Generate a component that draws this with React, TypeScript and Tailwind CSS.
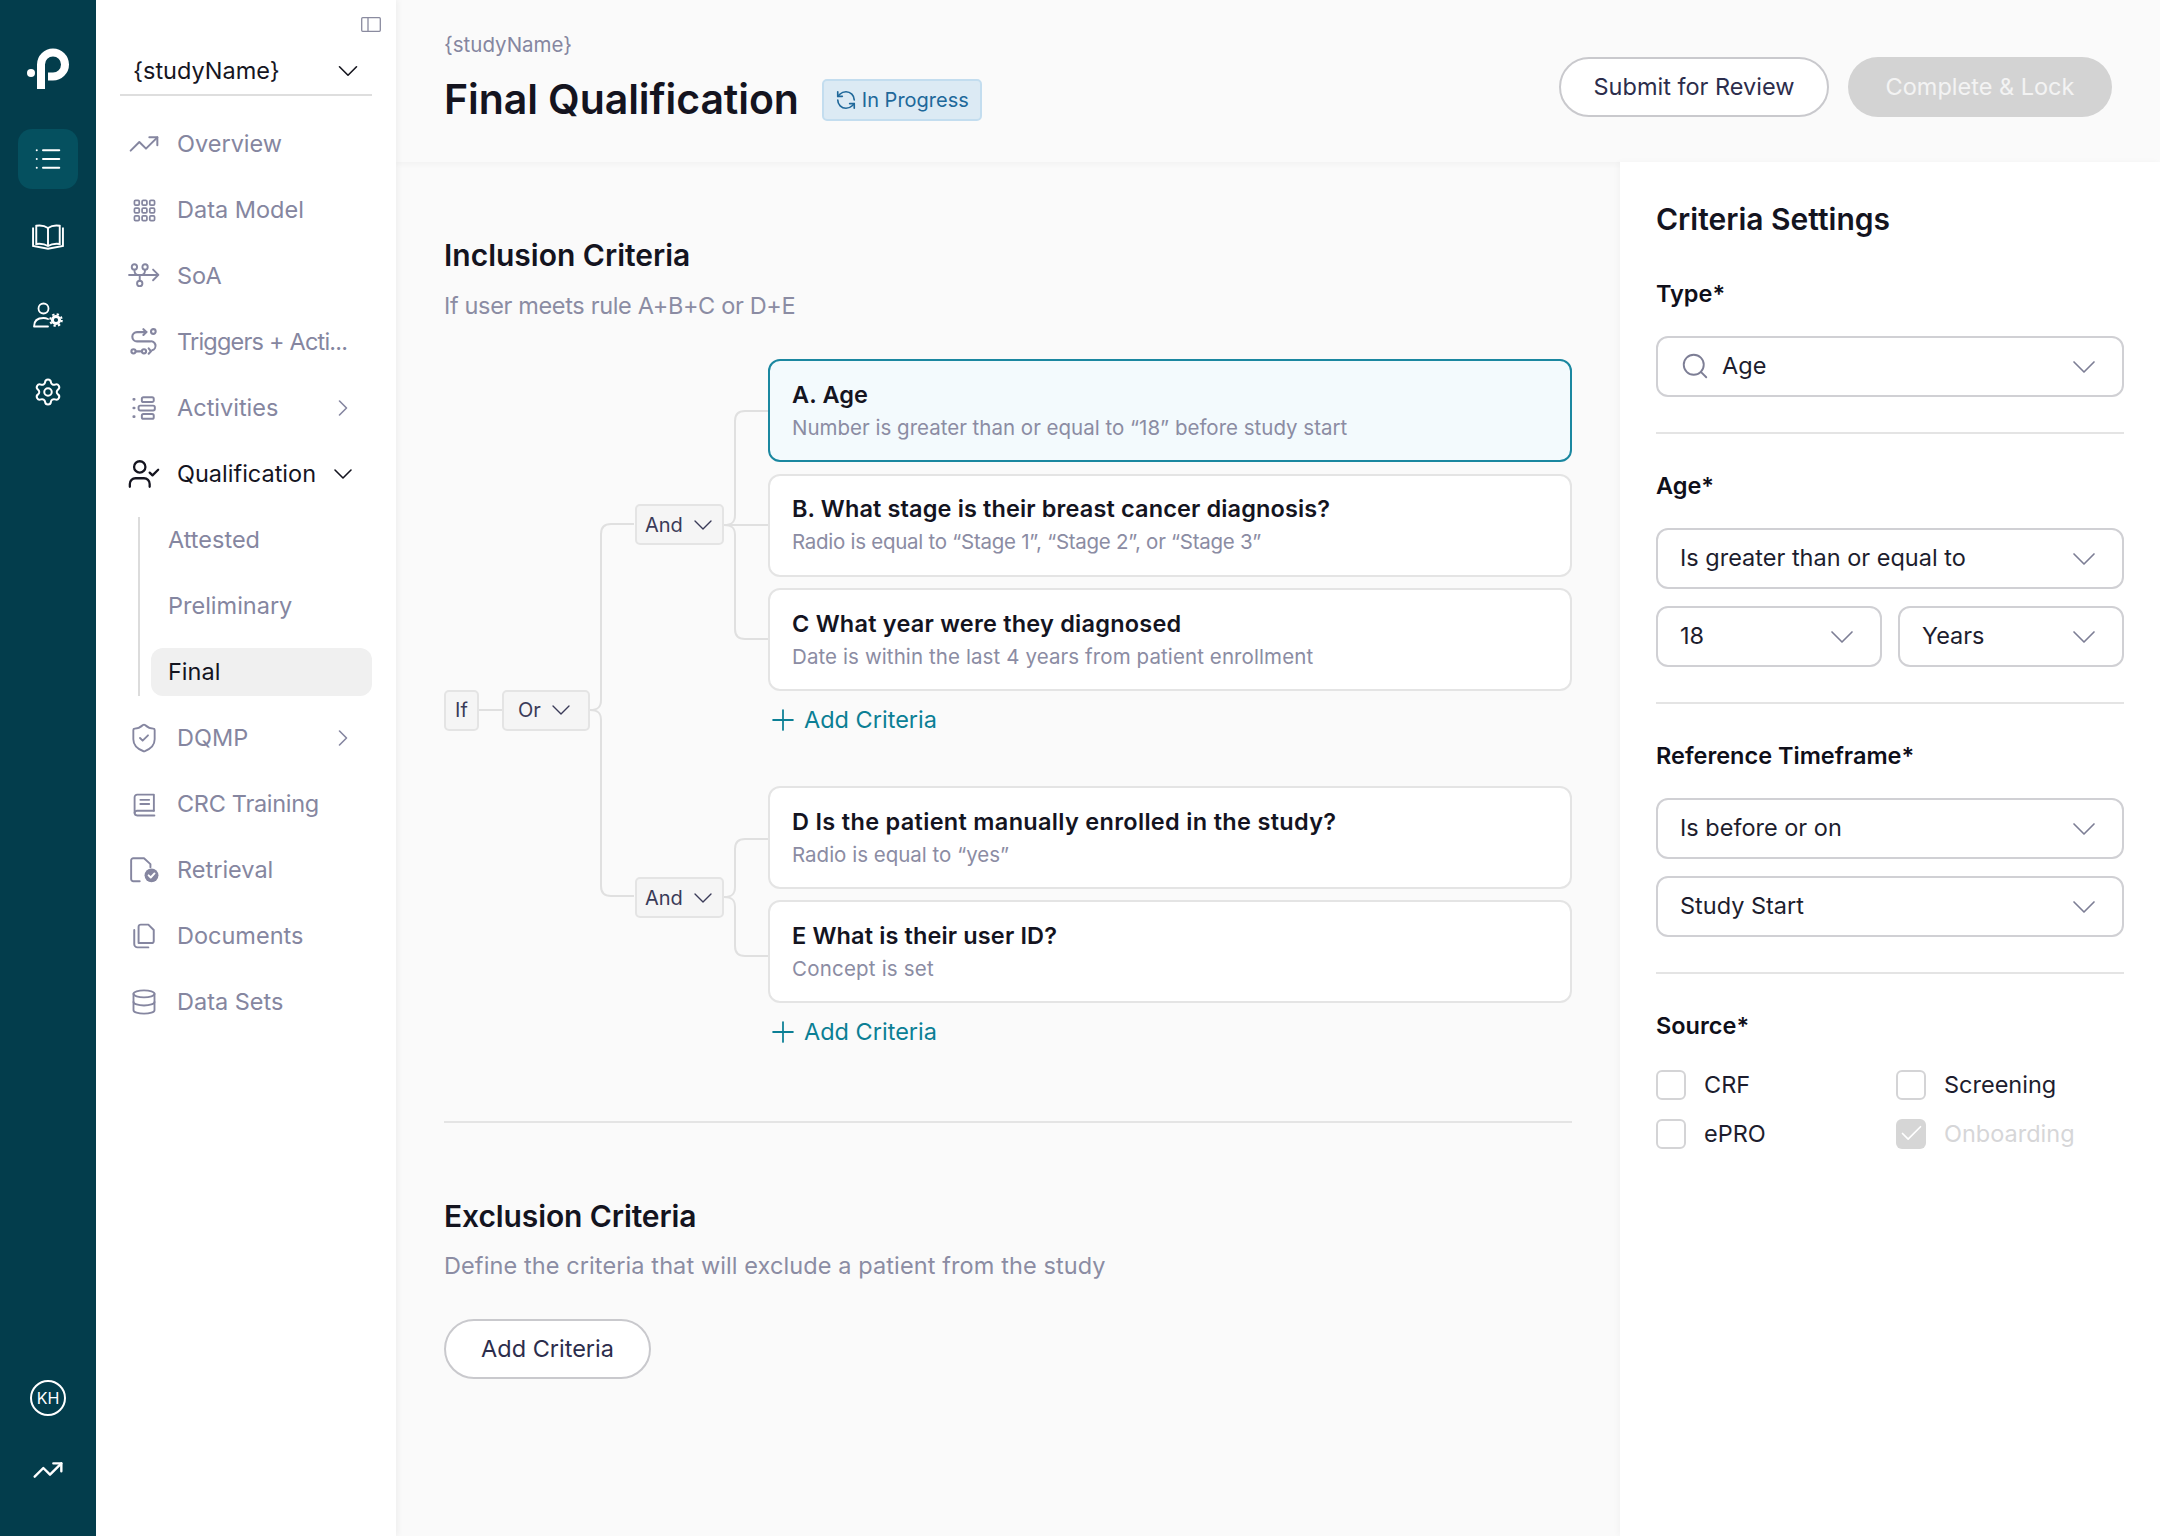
import React from "react";
import {
  ChevronDown,
  ChevronRight,
  Check,
  Database,
  List,
  Plus,
  RefreshCcw,
  Search,
  Settings,
  ShieldCheck,
  TrendingUp,
  UserCheck,
} from "lucide-react";

type IconProps = { className?: string };

const stroke = {
  fill: "none",
  stroke: "currentColor",
  strokeWidth: 1.8,
  strokeLinecap: "round" as const,
  strokeLinejoin: "round" as const,
};

function LogoIcon() {
  return (
    <svg viewBox="0 0 48 50" className="w-[48px] h-[50px]">
      <circle cx="7" cy="29" r="4" fill="#fff" />
      <path d="M17 45V20.5A12 12 0 1 1 29 32.5H24" fill="none" stroke="#fff" strokeWidth="8" />
    </svg>
  );
}

function RailBookIcon() {
  return (
    <svg viewBox="0 0 30 24" className="w-[32px] h-[26px]" fill="none" stroke="currentColor" strokeWidth="1.8">
      <path d="M1 3v17.5l14 2.5 14-2.5V3" />
      <path d="M4 1.5c4-.6 8 0 11 2 3-2 7-2.6 11-2v17c-4-.5-8 0-11 2-3-2-7-2.5-11-2z" />
      <path d="M15 3.500v17" />
    </svg>
  );
}

function RailUserGearIcon() {
  return (
    <svg viewBox="0 0 30 26" className="w-[30px] h-[26px]" fill="none" stroke="currentColor" strokeWidth="1.8">
      <circle cx="10.500" cy="6.500" r="5" />
      <path d="M1 24.500c0-6 3.500-8.500 9.500-8.500 2 0 3 .3 4.500 1M1 24.500h14" strokeLinecap="round" />
      <circle cx="23" cy="18" r="3.600" strokeWidth="3" />
      <circle cx="23" cy="18" r="5.800" strokeWidth="2" strokeDasharray="2.300 2.250" />
    </svg>
  );
}

function PanelIcon() {
  return (
    <svg viewBox="0 0 20 15" className="w-[20px] h-[15px]" {...stroke} strokeWidth={1.3}>
      <rect x="0.700" y="0.700" width="18.600" height="13.600" rx="1" />
      <path d="M7 .7v13.600" />
    </svg>
  );
}

function GridDotsIcon({ className }: IconProps) {
  const cells = [1.5, 9.5, 17.5];
  return (
    <svg viewBox="0 0 24 24" className={className} fill="none" stroke="currentColor" strokeWidth="1.8">
      {cells.map((y) =>
        cells.map((x) => <rect key={`${x}-${y}`} x={x} y={y} width="5" height="5" rx="1.200" />)
      )}
    </svg>
  );
}

function SoaIcon({ className }: IconProps) {
  return (
    <svg viewBox="0 0 30 24" className={className} {...stroke}>
      <path d="M1 11h27M23.500 6l5 5-5 5" />
      <circle cx="6" cy="3.500" r="2.500" />
      <circle cx="16" cy="3.500" r="2.500" />
      <circle cx="11" cy="19" r="2.500" />
      <path d="M6 6c0 3 .5 5 3 5M16 6c0 3-.5 5-3 5M11 16.500V11" />
    </svg>
  );
}

function TriggersIcon({ className }: IconProps) {
  return (
    <svg viewBox="0 0 24 24" className={className} {...stroke}>
      <path d="M14 3.500H6a3.800 3.800 0 0 0 0 8h11a3.800 3.800 0 0 1 2 7.500" />
      <path d="M11.500 1l2.500 2.500-2.500 2.500" />
      <circle cx="20" cy="3" r="2" />
      <circle cx="3" cy="20" r="1.800" />
      <circle cx="12" cy="20" r="1.800" />
      <path d="M5 20h4M16 17.500L18 20l-2 2" />
    </svg>
  );
}

function ActivitiesIcon({ className }: IconProps) {
  return (
    <svg viewBox="0 0 24 24" className={className} {...stroke}>
      <rect x="10" y="2" width="11" height="4.500" rx="1.500" />
      <rect x="7" y="9.800" width="15" height="4.500" rx="1.500" />
      <rect x="10" y="17.500" width="11" height="4.500" rx="1.500" />
      <path d="M2.500 4h.5M2.500 12h.5M2.500 20h.5" strokeWidth="2.400" />
    </svg>
  );
}

function TrainingBookIcon({ className }: IconProps) {
  return (
    <svg viewBox="0 0 24 24" className={className} {...stroke}>
      <path d="M21 18V2.500H5A2.500 2.500 0 0 0 2.500 5v15A2.500 2.500 0 0 0 5 22.500h16.500" />
      <path d="M2.500 20A2.500 2.500 0 0 1 5 18h16M8 7.500h8.500M8 11.500h8.500" />
    </svg>
  );
}

function RetrievalIcon({ className }: IconProps) {
  return (
    <svg viewBox="0 0 28 24" className={className} {...stroke}>
      <path d="M10 22.500H4A2 2 0 0 1 2 20.500V3a2 2 0 0 1 2-2h10l6 5.500v3" />
      <circle cx="21" cy="17" r="6.500" fill="currentColor" stroke="none" />
      <path d="M18.300 17l2 2 3.500-3.800" stroke="#fff" />
    </svg>
  );
}

function DocumentsIcon({ className }: IconProps) {
  return (
    <svg viewBox="0 0 24 24" className={className} {...stroke}>
      <path d="M7 18.500V3.500a2 2 0 0 1 2-2h7l5 5V16.500a2 2 0 0 1-2 2z" />
      <path d="M3 6.500v13a3 3 0 0 0 3 3h10" />
    </svg>
  );
}

function Logic({ label, wide = false, caret = true }: { label: string; wide?: boolean; caret?: boolean }) {
  return (
    <div
      className={`flex items-center justify-between shrink-0 h-[41px] rounded-[5px] border-2 border-[#e4e4e4] bg-[#f5f5f5] text-[20px] text-[#3a3b58] ${
        wide ? "w-[89px] pl-[8px] pr-[3px]" : caret ? "w-[88px] pl-[14px] pr-[11px]" : "w-[35px] justify-center"
      }`}
    >
      <span>{label}</span>
      {caret && <ChevronDown className="w-[32px] h-[32px]" strokeWidth={1} />}
    </div>
  );
}

function Branch({ height, ends, mid }: { height: number; ends: number[]; mid: number }) {
  const paths = ends.map((y) => {
    if (y === mid) return `M0 ${mid}H44`;
    const dir = y < mid ? -1 : 1;
    return `M0 ${mid}C8 ${mid} 11 ${mid + dir * 3} 11 ${mid + dir * 10}V${y - dir * 10}Q11 ${y} 21 ${y}H44`;
  });
  return (
    <svg width="44" height={height} className="shrink-0 overflow-visible" fill="none" stroke="#e0e0e0" strokeWidth="2">
      {paths.map((d) => (
        <path key={d} d={d} />
      ))}
    </svg>
  );
}

function CriteriaCard({
  title,
  desc,
  active = false,
  titleClass = "tracking-[0.130px]",
  descClass = "",
}: {
  title: string;
  desc: string;
  active?: boolean;
  titleClass?: string;
  descClass?: string;
}) {
  return (
    <div
      className={`flex flex-col justify-center h-[103px] rounded-[12px] border-2 px-[22px] ${
        active ? "border-[#1a87a0] bg-[#f3fafd]" : "border-[#e4e4e4] bg-white"
      }`}
    >
      <div className={`text-[23.500px] leading-[32px] font-semibold text-[#14141f] ${titleClass}`}>{title}</div>
      <div className={`mt-[2px] text-[20.500px] leading-[30px] text-[#8b8ca3] ${descClass}`}>{desc}</div>
    </div>
  );
}

function AddCriteria() {
  return (
    <div className="flex items-center h-[58px] ml-[-2px] gap-[4px] text-[#0b7f95] text-[23.500px]">
      <Plus className="w-[34px] h-[34px]" strokeWidth={1.25} />
      <span>Add Criteria</span>
    </div>
  );
}

function SelectBox({ value, search = false }: { value: string; search?: boolean }) {
  return (
    <div className="flex items-center justify-between flex-1 h-[61px] rounded-[12px] border-2 border-[#d0d0d4] bg-white pl-[22px] pr-[18px]">
      <div className="flex items-center gap-[12px] pb-[2px] text-[23.500px] text-[#1d1d2e]">
        {search && <Search className="w-[30px] h-[30px] text-[#7d7e95]" strokeWidth={1.5} />}
        <span>{value}</span>
      </div>
      <ChevronDown className="w-[40px] h-[40px] text-[#7d7e95]" strokeWidth={1} />
    </div>
  );
}

function FieldLabel({ children, className = "" }: { children: React.ReactNode; className?: string }) {
  return <div className={`h-[30px] leading-[32px] text-[23.500px] font-semibold text-[#0f0f1a] ${className}`}>{children}</div>;
}

function Box({ label, disabled = false }: { label: string; disabled?: boolean }) {
  return (
    <div className="flex items-center h-[30px]">
      {disabled ? (
        <div className="flex items-center justify-center w-[30px] h-[30px] rounded-[6px] bg-[#d6d6d6]">
          <Check className="w-[27px] h-[27px] text-white" strokeWidth={1.5} />
        </div>
      ) : (
        <div className="w-[30px] h-[30px] rounded-[6px] border-2 border-[#d4d4d6] bg-white" />
      )}
      <span className={`ml-[18px] text-[23.500px] ${disabled ? "text-[#d6d6d8]" : "text-[#1d1d2e]"}`}>{label}</span>
    </div>
  );
}

const navTop = [
  { label: "Overview", icon: <TrendingUp className="w-[32px] h-[32px]" strokeWidth={1.5} /> },
  { label: "Data Model", icon: <GridDotsIcon className="w-[23px] h-[23px]" /> },
  { label: "SoA", icon: <SoaIcon className="w-[32px] h-[26px]" /> },
  { label: "Triggers + Acti...", icon: <TriggersIcon className="w-[28px] h-[28px]" />, textClass: "tracking-[-0.800px]" },
];

const navBottom = [
  { label: "CRC Training", icon: <TrainingBookIcon className="w-[25px] h-[25px]" />, textClass: "tracking-[-0.300px]" },
  { label: "Retrieval", icon: <RetrievalIcon className="w-[30px] h-[26px]" /> },
  { label: "Documents", icon: <DocumentsIcon className="w-[26px] h-[26px]" /> },
  { label: "Data Sets", icon: <Database className="w-[28px] h-[28px]" strokeWidth={1.6} /> },
];

function NavRow({
  label,
  icon,
  arrow,
  textClass = "",
}: {
  label: string;
  icon: React.ReactNode;
  arrow?: boolean;
  textClass?: string;
}) {
  return (
    <div className="flex items-center h-[66px] text-[#8586a0] text-[23.500px]">
      <div className="flex items-center justify-center w-[48px] shrink-0">{icon}</div>
      <span className={`ml-[9px] flex-1 whitespace-nowrap ${textClass}`}>{label}</span>
      {arrow && <ChevronRight className="w-[28px] h-[28px] mr-[15px]" strokeWidth={1.4} />}
    </div>
  );
}

export default function App() {
  return (
    <div className="flex min-h-screen w-full bg-[#fafafa] font-['Inter',sans-serif]">
      {/* Icon rail */}
      <aside className="flex flex-col items-center w-[96px] shrink-0 bg-[#033d4c] text-white">
        <div className="mt-[44px] h-[50px]">
          <LogoIcon />
        </div>
        <div className="mt-[35px] flex items-center justify-center w-[60px] h-[60px] rounded-[14px] bg-[#05505f]">
          <List className="w-[30px] h-[30px]" strokeWidth={1.6} />
        </div>
        <div className="mt-[18px] flex items-center justify-center h-[60px]">
          <RailBookIcon />
        </div>
        <div className="mt-[18px] flex items-center justify-center h-[60px]">
          <RailUserGearIcon />
        </div>
        <div className="mt-[17px] flex items-center justify-center h-[60px]">
          <Settings className="w-[30px] h-[30px]" strokeWidth={1.6} />
        </div>
        <div className="mt-auto flex items-center justify-center w-[36px] h-[36px] rounded-full border-2 border-white text-[16px]">
          KH
        </div>
        <div className="mt-[38px] mb-[50px]">
          <TrendingUp className="w-[32px] h-[32px]" strokeWidth={1.8} />
        </div>
      </aside>

      {/* Study nav */}
      <nav className="relative z-10 w-[300px] shrink-0 bg-white px-[24px] shadow-[2px_0_6px_rgba(0,0,0,0.05)]">
        <div className="flex justify-end h-[17px] pt-[17px]">
          <div className="text-[#8a8b9f] mr-[-9px]">
            <PanelIcon />
          </div>
        </div>
        <div className="mt-[35px] flex items-center justify-between h-[44px] border-b-2 border-[#dedede] pl-[13px] pr-[7px] pb-[4px] text-[#16161f]">
          <span className="text-[23.500px]">{"{studyName}"}</span>
          <ChevronDown className="w-[34px] h-[34px]" strokeWidth={1.15} />
        </div>
        <div className="mt-[15px]">
          {navTop.map((n) => (
            <NavRow key={n.label} {...n} />
          ))}
          <NavRow
            label="Activities"
            arrow
            icon={<ActivitiesIcon className="w-[26px] h-[26px]" />}
          />
          <div className="flex items-center h-[66px] text-[#14141f] text-[23.500px]">
            <div className="flex items-center justify-center w-[48px] shrink-0">
              <UserCheck className="w-[34px] h-[34px]" strokeWidth={1.6} />
            </div>
            <span className="ml-[9px] flex-1">Qualification</span>
            <ChevronDown className="w-[32px] h-[32px] mr-[13px]" strokeWidth={1.2} />
          </div>
          <div className="ml-[18px] mt-[10px] pl-[11px] border-l-2 border-[#dcdcdc]">
            <div className="flex items-center h-[46px] pl-[17px] text-[23.500px] text-[#8586a0]">Attested</div>
            <div className="flex items-center h-[46px] mt-[20px] pl-[17px] text-[23.500px] text-[#8586a0]">Preliminary</div>
            <div className="flex items-center h-[48px] mt-[19px] rounded-[12px] bg-[#f0f0f0] pl-[17px] text-[23.500px] text-[#14141f]">Final</div>
          </div>
          <div className="mt-[9px]">
            <NavRow
              label="DQMP"
              arrow
              icon={<ShieldCheck className="w-[32px] h-[32px]" strokeWidth={1.4} />}
            />
            {navBottom.map((n) => (
              <NavRow key={n.label} {...n} />
            ))}
          </div>
        </div>
      </nav>

      <div className="flex flex-col flex-1 min-w-0">
        {/* Page header */}
        <header className="relative z-[5] flex justify-between h-[162px] px-[48px] bg-[#fafafa] shadow-[0_2px_6px_rgba(0,0,0,0.04)]">
          <div className="pt-[30px]">
            <div className="h-[30px] leading-[30px] text-[20.500px] text-[#8586a0]">{"{studyName}"}</div>
            <div className="mt-[15px] flex items-center gap-[23px] h-[50px]">
              <h1 className="text-[41px] font-semibold text-[#14141f] tracking-[-0.080px]">Final Qualification</h1>
              <div className="flex items-center gap-[5px] h-[42px] px-[11px] rounded-[5px] border-2 border-[#c3ddef] bg-[#dceaf4] text-[#20689a] text-[20px]">
                <RefreshCcw className="w-[22px] h-[22px]" strokeWidth={1.8} />
                <span>In Progress</span>
              </div>
            </div>
          </div>
          <div className="flex gap-[19px] pt-[57px]">
            <button className="h-[60px] w-[270px] rounded-full border-2 border-[#c9c9cd] bg-white text-[23.500px] text-[#2c2d4c]">
              Submit for Review
            </button>
            <button className="h-[60px] w-[264px] rounded-full bg-[#d3d3d3] text-[23.500px] text-[#f3f3f3]">
              Complete &amp; Lock
            </button>
          </div>
        </header>

        <div className="flex flex-1">
          {/* Criteria builder */}
          <main className="flex-1 min-w-0 px-[48px] pt-[73px]">
            <h2 className="h-[40px] leading-[40px] text-[30px] font-semibold text-[#14141f]">Inclusion Criteria</h2>
            <p className="mt-[16px] h-[30px] leading-[30px] text-[23.500px] text-[#8b8ca3] tracking-[-0.350px]">
              If user meets rule A+B+C or D+E
            </p>

            <div className="mt-[38px] flex items-center">
              <Logic label="If" caret={false} />
              <div className="w-[23px] h-[2px] bg-[#e0e0e0] shrink-0" />
              <Logic label="Or" />
              <Branch height={372} ends={[0, 372]} mid={186} />
              <div className="flex-1 min-w-0 ml-[1px] flex flex-col gap-[37px]">
                <div className="flex items-start">
                  <div className="mt-[145px] shrink-0">
                    <Logic label="And" wide />
                  </div>
                  <div className="shrink-0">
                    <Branch height={331} ends={[52, 166, 280]} mid={166} />
                  </div>
                  <div className="flex-1 min-w-0">
                    <div className="flex flex-col gap-[11.500px]">
                      <CriteriaCard
                        active
                        title="A. Age"
                        desc="Number is greater than or equal to “18” before study start"
                      />
                      <CriteriaCard
                        title="B. What stage is their breast cancer diagnosis?"
                        desc="Radio is equal to “Stage 1”, “Stage 2”, or “Stage 3”"
                        descClass="tracking-[-0.270px]"
                      />
                      <CriteriaCard
                        title="C What year were they diagnosed"
                        titleClass="tracking-[0.220px]"
                        desc="Date is within the last 4 years from patient enrollment"
                        descClass="tracking-[0.100px]"
                      />
                    </div>
                    <AddCriteria />
                  </div>
                </div>
                <div className="flex items-start">
                  <div className="mt-[91px] shrink-0">
                    <Logic label="And" wide />
                  </div>
                  <div className="shrink-0">
                    <Branch height={217} ends={[53, 170]} mid={111} />
                  </div>
                  <div className="flex-1 min-w-0">
                    <div className="flex flex-col gap-[11px]">
                      <CriteriaCard
                        title="D Is the patient manually enrolled in the study?"
                        titleClass="tracking-[0.310px]"
                        desc="Radio is equal to “yes”"
                      />
                      <CriteriaCard title="E What is their user ID?" desc="Concept is set" descClass="tracking-[0.200px]" />
                    </div>
                    <AddCriteria />
                  </div>
                </div>
              </div>
            </div>

            <div className="mt-[60px] h-[2px] bg-[#e4e4e4]" />
            <h2 className="mt-[73px] h-[40px] leading-[40px] text-[30px] font-semibold text-[#14141f] tracking-[-0.100px]">
              Exclusion Criteria
            </h2>
            <p className="mt-[15px] h-[30px] leading-[30px] text-[23.500px] text-[#8b8ca3] tracking-[0.100px]">
              Define the criteria that will exclude a patient from the study
            </p>
            <button className="mt-[38px] h-[60px] w-[207px] rounded-full border-2 border-[#c9c9cd] bg-white text-[23.500px] text-[#2c2d4c]">
              Add Criteria
            </button>
          </main>

          {/* Settings panel */}
          <aside className="relative z-[6] w-[540px] shrink-0 bg-white px-[36px] pt-[37px] shadow-[-2px_0_6px_rgba(0,0,0,0.03)]">
            <h2 className="h-[40px] leading-[40px] text-[30px] font-semibold text-[#14141f]">Criteria Settings</h2>

            <FieldLabel className="mt-[39px]">Type*</FieldLabel>
            <div className="mt-[28px] flex">
              <SelectBox search value="Age" />
            </div>
            <div className="mt-[35px] h-[2px] bg-[#e4e4e4]" />

            <FieldLabel className="mt-[36px]">Age*</FieldLabel>
            <div className="mt-[28px] flex">
              <SelectBox value="Is greater than or equal to" />
            </div>
            <div className="mt-[17px] flex gap-[16px]">
              <SelectBox value="18" />
              <SelectBox value="Years" />
            </div>
            <div className="mt-[35px] h-[2px] bg-[#e4e4e4]" />

            <FieldLabel className="mt-[36px]">Reference Timeframe*</FieldLabel>
            <div className="mt-[28px] flex">
              <SelectBox value="Is before or on" />
            </div>
            <div className="mt-[17px] flex">
              <SelectBox value="Study Start" />
            </div>
            <div className="mt-[35px] h-[2px] bg-[#e4e4e4]" />

            <FieldLabel className="mt-[36px]">Source*</FieldLabel>
            <div className="mt-[30px] grid grid-cols-[240px_1fr] gap-y-[18.500px]">
              <Box label="CRF" />
              <Box label="Screening" />
              <Box label="ePRO" />
              <Box label="Onboarding" disabled />
            </div>
          </aside>
        </div>
      </div>
    </div>
  );
}
